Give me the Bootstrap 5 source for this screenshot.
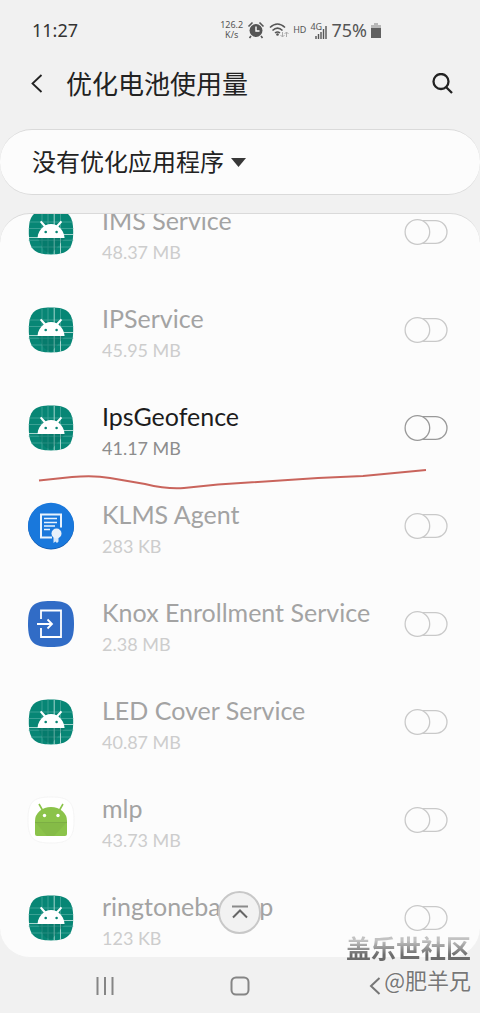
<!DOCTYPE html>
<html lang="zh-CN">
<head>
<meta charset="utf-8">
<meta name="viewport" content="width=device-width, initial-scale=1">
<title>优化电池使用量</title>
<link href="https://cdn.jsdelivr.net/npm/bootstrap@5.3.0/dist/css/bootstrap.min.css" rel="stylesheet">
<style>
body{background:#f1f1f1;color:#222;font-family:Lato,"Noto Sans CJK SC",sans-serif;height:100vh;min-height:400px}
.status-bar{height:60px;padding:0 99px 0 32px;font-family:"Noto Sans","Noto Sans CJK SC",sans-serif;font-size:18px;color:#555}
.clock{color:#333}
.tiny{font-size:9px;line-height:10px}
.network{font-size:9px;line-height:9px;width:17px;height:17px}
.network svg{right:0;bottom:0}
.title-bar{height:48px;padding:0 26px 0 28px}
.title-bar h1{font-size:26px;line-height:40px;font-weight:400;padding-left:20px}
.panel{background:#fcfcfc;border:solid #dadada;border-width:1px 0;border-radius:32px}
.filter-panel{height:67px;margin-top:21px;padding:0 32px}
.filter-select{appearance:none;background:transparent url("data:image/svg+xml,%3Csvg xmlns='http://www.w3.org/2000/svg' width='16' height='10'%3E%3Cpath d='M0 0h16L8 10z' fill='%23383838'/%3E%3C/svg%3E") no-repeat right center;background-size:15px 9px;border:0;font-size:24px;line-height:36px;padding:0 22px 0 0;color:#222;font-family:inherit;font-weight:400}
.app-panel{margin-top:18px;border-bottom-color:#f1f1f1;border-radius:30px;min-height:0}
.app-list{margin-top:-31px}
.app-row{height:98px;padding:0 32px 0 27px;color:#a3a3a3}
.app-row label{font-size:25px;line-height:30px}
.app-size{font-size:18px;line-height:24px;color:#cdcdcd;margin-top:5px}
.app-row.enabled{color:#1c1c1c}
.enabled .app-size{color:#8d8d8d}
.app-info{padding-left:27px;padding-top:4px}
.toggle{appearance:none;width:44px;height:26px;margin:0;border:0;background:url("data:image/svg+xml,%3Csvg xmlns='http://www.w3.org/2000/svg' width='44' height='26' fill='%23fcfcfc' stroke='%23c9c9c9' stroke-width='1.3'%3E%3Crect x='8' y='1.6' width='35' height='22.8' rx='11.4'/%3E%3Ccircle cx='13.4' cy='13' r='12.3'/%3E%3C/svg%3E") no-repeat center}
.enabled .toggle{background-image:url("data:image/svg+xml,%3Csvg xmlns='http://www.w3.org/2000/svg' width='44' height='26' fill='%23fcfcfc' stroke='%23999' stroke-width='1.3'%3E%3Crect x='8' y='1.6' width='35' height='22.8' rx='11.4'/%3E%3Ccircle cx='13.4' cy='13' r='12.3'/%3E%3C/svg%3E")}
.pen-line{left:38px;top:86px;height:28px;width:calc(100% - 90px);z-index:1;pointer-events:none}
.to-top{width:43px;height:43px;bottom:23px;left:calc(50% - 22px);border:2px solid #c8c8c8;background:#f2f2f2;border-radius:50%}
.nav-keys{height:56px;padding:0 38px 2px}
.nav-keys button,.icon-btn{background:none;border:0;padding:0}
.stamp{right:9px;bottom:18px;z-index:3;pointer-events:none;font-family:"Noto Sans CJK SC",sans-serif;color:#777;text-shadow:0 0 2px #fff}
.stamp-site{font-size:25px;line-height:32px;font-weight:700;color:transparent;background:linear-gradient(#c2c2c2 30%,#6c6c6c 75%);background-clip:text;-webkit-background-clip:text;text-shadow:none}
.stamp-user{font-size:22px;line-height:32px;font-weight:400}
</style>
</head>
<body class="d-flex flex-column position-relative overflow-hidden">
<svg class="d-none">
<symbol id="robot" viewBox="0 0 48 48">
<path d="M24 1.6c17 0 22.2 5.4 22.2 22.4S41 46.4 24 46.4 1.8 41 1.8 24 7 1.6 24 1.6z" fill="#078675"/>
<path d="M2.4 14h43.2M1.8 20.5h44.4M1.8 32.2h44.4M4 39h40M15 2.3v43.4M21 1.8v44.4M33.5 2.6v43" stroke="#42a497" stroke-width=".9"/>
<path d="M27.2 1.8v44.4M2 29.5h9M37 26.5h9M33.5 28v18" stroke="#a5d5ce" stroke-width="1"/>
<path d="M11 30h27L25 45c-6 0-9-2-14-15z" fill="#056c60" opacity=".4"/>
<path d="M10.5 30c.3-5 2.600-9 6.200-11.600l-3.800-4.500 1.500-1.200 4.200 4.500c3.400-1.500 7.500-1.500 10.900 0l4.200-4.500 1.500 1.200-3.800 4.500c3.600 2.600 5.900 6.600 6.200 11.600z" fill="#fff"/>
<circle cx="18.700" cy="24" r="1.300" fill="#078675"/><circle cx="29.600" cy="24" r="1.300" fill="#078675"/>
</symbol>
<symbol id="certificate" viewBox="0 0 48 48">
<circle cx="24" cy="24.500" r="23" fill="#1056aa"/><circle cx="24" cy="23.700" r="23" fill="#1978dc"/>
<path d="M25 35.500H14V12.500h20v13" fill="none" stroke="#e9f3fd" stroke-width="2"/>
<path d="M17 16.500h13M17 20.500h13M17 24h11M17 27.500h6" stroke="#e9f3fd" stroke-width="1.700"/>
<path d="M26.500 33v8l2-1.500 1.500 1.500 1.500-1.500V33z" fill="#d9e8f8"/><circle cx="29.500" cy="31.500" r="5" fill="#e9f1fa"/>
</symbol>
<symbol id="enroll" viewBox="0 0 48 48">
<path d="M24 1c18 0 23 5 23 23s-5 23-23 23S1 42 1 24 6 1 24 1z" fill="#316cc6"/>
<path d="M14 19v-8.500h20v26.500H14v-9M10 24h15M20.500 19.500 25 24l-4.500 4.500" fill="none" stroke="#fff" stroke-width="1.800"/>
</symbol>
<symbol id="droid" viewBox="0 0 48 48">
<path d="M24 1c18 0 23 5 23 23s-5 23-23 23S1 42 1 24 6 1 24 1z" fill="#fff" stroke="#f0f0f0" stroke-width=".7"/>
<path d="m12 8 4 7M36 8l-4 7" stroke="#8bc34a" stroke-width="1.600"/>
<path d="M8 38V25a16 14 0 0 1 32 0v13q0 2-2 2H10q-2 0-2-2z" fill="#8bc34a"/>
<path d="M9 27h30L27 40H20z" fill="#7aad42" opacity=".35"/><path d="M8 26.500h32" stroke="#78a842" stroke-width=".8"/>
<circle cx="17.500" cy="19.500" r="1.700" fill="#fff"/><circle cx="31" cy="19.500" r="1.700" fill="#fff"/>
</symbol>
</svg>

<header>
<div class="status-bar d-flex align-items-center">
<span class="clock me-auto">11:27</span>
<span class="tiny text-center">126.2<br>K/s</span>
<svg class="ms-1" width="18" height="18" viewBox="0 0 18 18"><circle cx="9" cy="9.500" r="6.500" fill="#555"/><path d="M1.500 5.500l4-4M16.500 5.500l-4-4M4 15l-1.500 2M14 15l1.500 2" stroke="#555" stroke-width="1.600"/><path d="M9 5.500V10h3.500" fill="none" stroke="#fff" stroke-width="1.400"/></svg>
<svg class="ms-1" width="20" height="18" viewBox="0 0 20 18"><path d="M1 6.500q7.500-7 15 0M3.500 9.500q5-4.600 10 0M6 12q2.500-2 5 0" fill="none" stroke="#555" stroke-width="1.600"/><circle cx="8.500" cy="13.500" r="1.300" fill="#555"/><path d="M13.500 11v5m-2-2 2 2 2-2M17.500 16v-5m-2 2 2-2 2 2" fill="none" stroke="#aaa"/></svg>
<span class="tiny ms-1">HD</span>
<span class="network position-relative ms-1">4G<svg class="position-absolute" width="12" height="14" viewBox="0 0 12 14"><path d="M1 14v-3M3.500 14V9M6 14V7M8.500 14V4M11 14V1" stroke="#555" stroke-width="1.400"/></svg></span>
<span class="ms-1">75%</span>
<svg class="ms-1" width="10" height="15" viewBox="0 0 10 15"><path d="M3 0h4v2h3v3H0V2h3z" fill="#b9b9b9"/><path d="M0 5h10v10H0z" fill="#606060"/></svg>
</div>
<div class="title-bar d-flex align-items-center">
<button class="icon-btn d-flex" aria-label="返回"><svg width="18" height="22" viewBox="0 0 18 22"><path d="M13.500 2 4.500 10.500l9 8.500" fill="none" stroke="#222" stroke-width="1.800"/></svg></button>
<h1 class="mb-0 me-auto">优化电池使用量</h1>
<button class="icon-btn d-flex" aria-label="搜索"><svg width="22" height="22" viewBox="0 0 22 22" fill="none" stroke="#222"><circle cx="9" cy="8.500" r="7.500" stroke-width="2.300"/><path d="m14 14 6 6" stroke-width="2.300"/></svg></button>
</div>
</header>

<div class="panel filter-panel d-flex align-items-center">
<select class="filter-select" aria-label="筛选"><option>没有优化应用程序</option></select>
</div>

<main class="panel app-panel flex-fill overflow-hidden position-relative">
<ul class="app-list list-unstyled mb-0">
<li class="app-row d-flex align-items-center"><svg width="48" height="48"><use href="#robot"/></svg><div class="app-info me-auto"><label class="d-block" for="a1">IMS Service</label><div class="app-size">48.37 MB</div></div><input class="toggle" type="checkbox" role="switch" id="a1"></li>
<li class="app-row d-flex align-items-center"><svg width="48" height="48"><use href="#robot"/></svg><div class="app-info me-auto"><label class="d-block" for="a2">IPService</label><div class="app-size">45.95 MB</div></div><input class="toggle" type="checkbox" role="switch" id="a2"></li>
<li class="app-row enabled d-flex align-items-center position-relative"><svg width="48" height="48"><use href="#robot"/></svg><div class="app-info me-auto"><label class="d-block" for="a3">IpsGeofence</label><div class="app-size">41.17 MB</div></div><input class="toggle" type="checkbox" role="switch" id="a3">
<svg class="pen-line position-absolute" viewBox="0 0 390 28" preserveAspectRatio="none"><path d="M1 15.500 34 12Q56 10 72 13L107 19Q130 24.500 146 23L180 19.500 280 13 325 11Q345 9 388 5" fill="none" stroke="#c9645c" stroke-width="2"/></svg></li>
<li class="app-row d-flex align-items-center"><svg width="48" height="48"><use href="#certificate"/></svg><div class="app-info me-auto"><label class="d-block" for="a4">KLMS Agent</label><div class="app-size">283 KB</div></div><input class="toggle" type="checkbox" role="switch" id="a4"></li>
<li class="app-row d-flex align-items-center"><svg width="48" height="48"><use href="#enroll"/></svg><div class="app-info me-auto"><label class="d-block" for="a5">Knox Enrollment Service</label><div class="app-size">2.38 MB</div></div><input class="toggle" type="checkbox" role="switch" id="a5"></li>
<li class="app-row d-flex align-items-center"><svg width="48" height="48"><use href="#robot"/></svg><div class="app-info me-auto"><label class="d-block" for="a6">LED Cover Service</label><div class="app-size">40.87 MB</div></div><input class="toggle" type="checkbox" role="switch" id="a6"></li>
<li class="app-row d-flex align-items-center"><svg width="48" height="48"><use href="#droid"/></svg><div class="app-info me-auto"><label class="d-block" for="a7">mlp</label><div class="app-size">43.73 MB</div></div><input class="toggle" type="checkbox" role="switch" id="a7"></li>
<li class="app-row d-flex align-items-center"><svg width="48" height="48"><use href="#robot"/></svg><div class="app-info me-auto"><label class="d-block" for="a8">ringtonebackup</label><div class="app-size">123 KB</div></div><input class="toggle" type="checkbox" role="switch" id="a8"></li>
</ul>
<button class="to-top position-absolute p-0 d-flex align-items-center justify-content-center" aria-label="回到顶部"><svg width="18" height="14" viewBox="0 0 18 14" fill="none"><path d="M1 1.500h16" stroke="#8a8a8a" stroke-width="2"/><path d="m2 12.500 7-7 7 7" stroke="#666" stroke-width="2"/></svg></button>
</main>

<nav class="nav-keys d-flex">
<button class="col" aria-label="最近"><svg width="18" height="18" viewBox="0 0 18 18"><path d="M1.500 0v18M9 0v18M16.500 0v18" stroke="#858585" stroke-width="2"/></svg></button>
<button class="col" aria-label="主屏幕"><svg width="20" height="20" viewBox="0 0 20 20"><rect x="1.500" y="1.500" width="17" height="17" rx="4.500" fill="none" stroke="#858585" stroke-width="2"/></svg></button>
<button class="col" aria-label="后退"><svg width="12" height="18" viewBox="0 0 12 18"><path d="M10.500 1 2 9l8.500 8" fill="none" stroke="#777" stroke-width="2"/></svg></button>
</nav>
<div class="stamp position-absolute text-end"><div class="stamp-site">盖乐世社区</div><div class="stamp-user">@肥羊兄</div></div>
<script src="https://cdn.jsdelivr.net/npm/bootstrap@5.3.0/dist/js/bootstrap.bundle.min.js"></script>
</body>
</html>
